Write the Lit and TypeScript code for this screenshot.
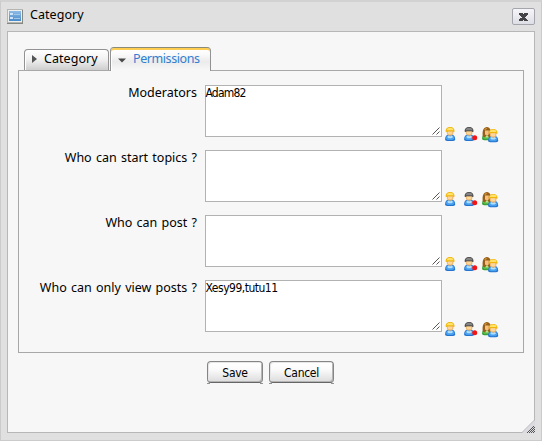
import { LitElement, html, css, svg } from "lit";
import { customElement, property } from "lit/decorators.js";

const body = (x: number, y: number, light: string, mid: string, dark: string) => svg`
  <g transform="translate(${x} ${y})">
    <path d="M.1 12C.2 8.9 1.1 7.6 2.8 7.2h4.6c1.8.4 2.7 1.7 2.8 4.8-.1 1-1 1.4-2 1.4H2.1c-1 0-1.9-.4-2-1.4z" fill=${dark}/>
    <path d="M.8 11C1.1 9 1.9 8 3.2 7.8H7c1.4.2 2.1 1.1 2.4 3.2l-1.6 1.5H2.5z" fill=${mid}/>
    <path d="M2.2 9.5l1.4-1.4 1.5.9 1.5-.9 1.5 1.4-1.5 1.3H3.6z" fill=${light}/>
  </g>`;

const head = (x: number, y: number, top: string, edge: string) => svg`
  <g transform="translate(${x} ${y})">
    <path d="M1.8 3.8h6.6v2.3c0 1.7-1.6 2.6-3.3 2.6S1.8 7.8 1.8 6.1z" fill="#ecb064"/>
    <path d="M2.7 4.4h4.7v2.2c-.8 1.3-3.8 1.3-4.7 0z" fill="#fcd79c"/>
    <path d="M.7 4.8C.4 2 2.1.1 5.1.1s4.7 1.9 4.4 4.7l-1.2.2-.6-.8H2.5l-.6.8z" fill=${edge}/>
    <path d="M1.7 3.2C2.1 1.6 3.4.8 5.1.8s3 .8 3.4 2.4z" fill=${top}/>
  </g>`;

@customElement("user-icon")
class UserIcon extends LitElement {
  static styles = css`:host { display: block; height: 14px; } svg { display: block; }`;
  @property() kind = "user";
  render() {
    if (this.kind === "group") {
      return html`<svg width="17" height="16" viewBox="0 0 17 16">
        ${body(0, -0.2, "#b4e58c", "#5abb48", "#319b32")}
        <path d="M.9 9.8C.3 6.5.2.4 4.7 0 9 .2 9.2 4.8 8.7 9.8l-2 .5-1.5-3-2 3z" fill="#986016"/>
        <path d="M2 2.6C2.8 1.2 4 .8 5.4 1L3.5 3z" fill="#c8943c"/>
        <path d="M3 3.4h3.8v3.4c0 2-3.8 2-3.8 0z" fill="#f6bf80"/>
        ${body(6, 1.8, "#b0dfff", "#48a0ee", "#2474cd")}
        ${head(6, 1.8, "#ffe26a", "#f0b60c")}
      </svg>`;
    }
    const dark = this.kind === "remove";
    return html`<svg width="15" height="14" viewBox="0 0 15 14">
      ${body(0, 0.5, "#b0dfff", "#48a0ee", "#2474cd")}
      ${head(0, 0, dark ? "#858585" : "#ffe26a", dark ? "#505050" : "#f0b60c")}
      ${dark ? svg`<circle cx="10.7" cy="10.7" r="2.5" fill="#f51414"/>` : null}
    </svg>`;
  }
}

@customElement("permission-row")
class PermissionRow extends LitElement {
  static styles = css`
    :host { display: flex; height: 52px; }
    .label { width: 178px; text-align: right; font: 12.5px/16px "Noto Sans", sans-serif; word-spacing: 1px; white-space: nowrap; color: #000; }
    .field { position: relative; box-sizing: border-box; width: 237px; height: 52px; margin-left: 8px; border: 1px solid #b2b2b2; background: #fff; font: 12px/14px "DejaVu Sans Condensed", sans-serif; color: #000; }
    .value { display: block; margin-left: -.5px; }
    .grip { position: absolute; right: 1px; bottom: 1px; display: block; }
    .icons { display: flex; align-items: flex-start; padding-top: 42px; }
    .one { margin-left: 2.5px; width: 19px; }
    .two { width: 18.5px; }
  `;
  @property() label = "";
  @property() value = "";
  @property({ type: Number }) spacing = 0;
  render() {
    return html`<div class="label">${this.label}</div>
      <div class="field"><span class="value" style="letter-spacing:${this.spacing}px">${this.value}</span>
        <svg class="grip" width="8" height="8"><path d="M.5 7.5l7-7M4.5 7.5l3-3" stroke="#555" fill="none"/></svg>
      </div>
      <div class="icons"><user-icon class="one"></user-icon><user-icon class="two" kind="remove"></user-icon><user-icon kind="group"></user-icon></div>`;
  }
}

@customElement("app-root")
class AppRoot extends LitElement {
  static styles = css`
    * { box-sizing: border-box; }
    :host { display: block; width: 542px; height: 441px; font: 12.5px/16px "Noto Sans", sans-serif; color: #000; }
    .window { height: 441px; background: #e0e0e0; border: 1px solid #cbcbcb; border-top: 2px solid #d2d2d2; padding: 0 6px 7px; display: flex; flex-direction: column; }
    .title { height: 29px; display: flex; padding: 6px 0 0 0; }
    .title svg { display: block; margin-top: 1px; }
    .name { margin-left: 7px; margin-top: -1px; flex: 1; letter-spacing: .05px; }
    .close { width: 23px; height: 17px; border: 1px solid #a5a5ad; border-radius: 2px; background: linear-gradient(#f6f6f9, #dedee6); display: flex; justify-content: center; align-items: center; }
    .title .close svg { margin: 0; }
    .content { position: relative; flex: 1; border: 1px solid #b7b7b7; background: #f7f7f7; padding: 15px 10px 0; }
    .tabs { display: flex; align-items: flex-end; height: 24px; padding-left: 6px; position: relative; z-index: 1; }
    .tab { display: flex; border: 1px solid #929292; border-bottom: 0; border-radius: 4px 4px 0 0; }
    .tab svg { display: block; flex: none; }
    .off { width: 85px; height: 21px; margin: 0 1px 1px 0; padding: 1px 0 0 7px; background: linear-gradient(#fff 0%, #f2f2f2 45%, #cecece 100%); box-shadow: inset 1px 1px #fff; }
    .off span { margin-left: 7px; letter-spacing: .05px; }
    .off svg { margin-top: 4px; }
    .on { width: 101px; height: 24px; padding: 0 0 0 7px; color: #2f7ed1; background: linear-gradient(#fff 0, #fbfbfb 25%, #ebebeb 60%, #f7f7f7 95%); border-top: 1px solid #8b8b78; box-shadow: inset 0 2px #ffce51, inset 1px 0 #fff; }
    .on span { margin-left: 7px; margin-top: 3px; letter-spacing: -.42px; }
    .on svg { margin-top: 10px; }
    .panel { width: 506px; height: 283px; margin-top: -1px; border: 1px solid #a8a8a8; padding: 14px 0 0; display: flex; flex-direction: column; gap: 13px; }
    .buttons { display: flex; gap: 6px; padding: 8px 0 0 189px; }
    .btn { height: 22px; border: 1px solid #858585; border-bottom-color: #666; border-radius: 4px; background: linear-gradient(#fff 0%, #fafafa 40%, #dcdcdc 100%); box-shadow: inset 1px 1px #e6e6e6, inset -1px -1px #b5b5b5; text-align: center; font: 12px/22px "DejaVu Sans Condensed", sans-serif; letter-spacing: -.3px; position: relative; }
    .btn::after { content: ""; position: absolute; left: -1px; right: -1px; bottom: -2px; height: 1px; background: linear-gradient(90deg, #929292 3px, transparent 3px calc(100% - 3px), #929292 calc(100% - 3px)); }
    .save { width: 56px; }
    .cancel { width: 65px; }
    .corner { position: absolute; right: -1px; bottom: -1px; display: block; }
  `;
  render() {
    return html`<div class="window">
      <div class="title">
        <svg width="16" height="15" viewBox="0 0 16 15" shape-rendering="crispEdges">
          <defs><linearGradient id="b" x2="0" y2="1"><stop stop-color="#8fbce6"/><stop offset="1" stop-color="#488ac9"/></linearGradient></defs>
          <rect x=".5" y=".5" width="15" height="13" fill="#eef0ee" stroke="#b5b6b3"/>
          <path d="M0 14h16M15.5 1v13" stroke="#858880"/>
          <path d="M2 2h12v10H2z" fill="url(#b)"/>
          <path d="M3 4h3v2H3zM3 8h3v2H3z" fill="#cbe4fa"/>
          <path d="M7 5.5h6M7 9.5h6" stroke="#a0c8eb"/>
        </svg>
        <div class="name">Category</div>
        <div class="close"><svg width="9" height="8" viewBox="0 0 9 8" shape-rendering="crispEdges"><path d="M0 0h4v1h1V0h4v2H8v1H7v1H6v1h1v1h1v1h1v1H5V7H4v1H0V6h1V5h2V4H2V3H1V2H0z" fill="#444448"/></svg></div>
      </div>
      <div class="content">
        <div class="tabs">
          <div class="tab off"><svg width="5" height="8"><path d="M0 0L5 4 0 8z" fill="#555"/></svg><span>Category</span></div>
          <div class="tab on"><svg width="8" height="5"><path d="M0 .5h8L4 4.5z" fill="#484848"/></svg><span>Permissions</span></div>
        </div>
        <div class="panel">
          <permission-row label="Moderators" value="Adam82" spacing="-0.8"></permission-row>
          <permission-row label="Who can start topics ?"></permission-row>
          <permission-row label="Who can post ?"></permission-row>
          <permission-row label="Who can only view posts ?" value="Xesy99,tutu11" spacing="-0.5"></permission-row>
        </div>
        <div class="buttons"><div class="btn save">Save</div><div class="btn cancel">Cancel</div></div>
        <svg class="corner" width="13" height="13" viewBox="0 0 13 13">
          <path d="M0 13L13 0v13z" fill="#dcdce0"/><path d="M0 12.5L12.5 0" stroke="#b4b4bb"/>
          <path d="M5 12.5h8M7 10.5h6M9 8.5h4M11 6.5h2" stroke="#555" stroke-dasharray="1 1"/>
          <path d="M6 11.5h7M8 9.5h5M10 7.5h3" stroke="#555" stroke-dasharray="1 1"/>
        </svg>
      </div>
    </div>`;
  }
}
